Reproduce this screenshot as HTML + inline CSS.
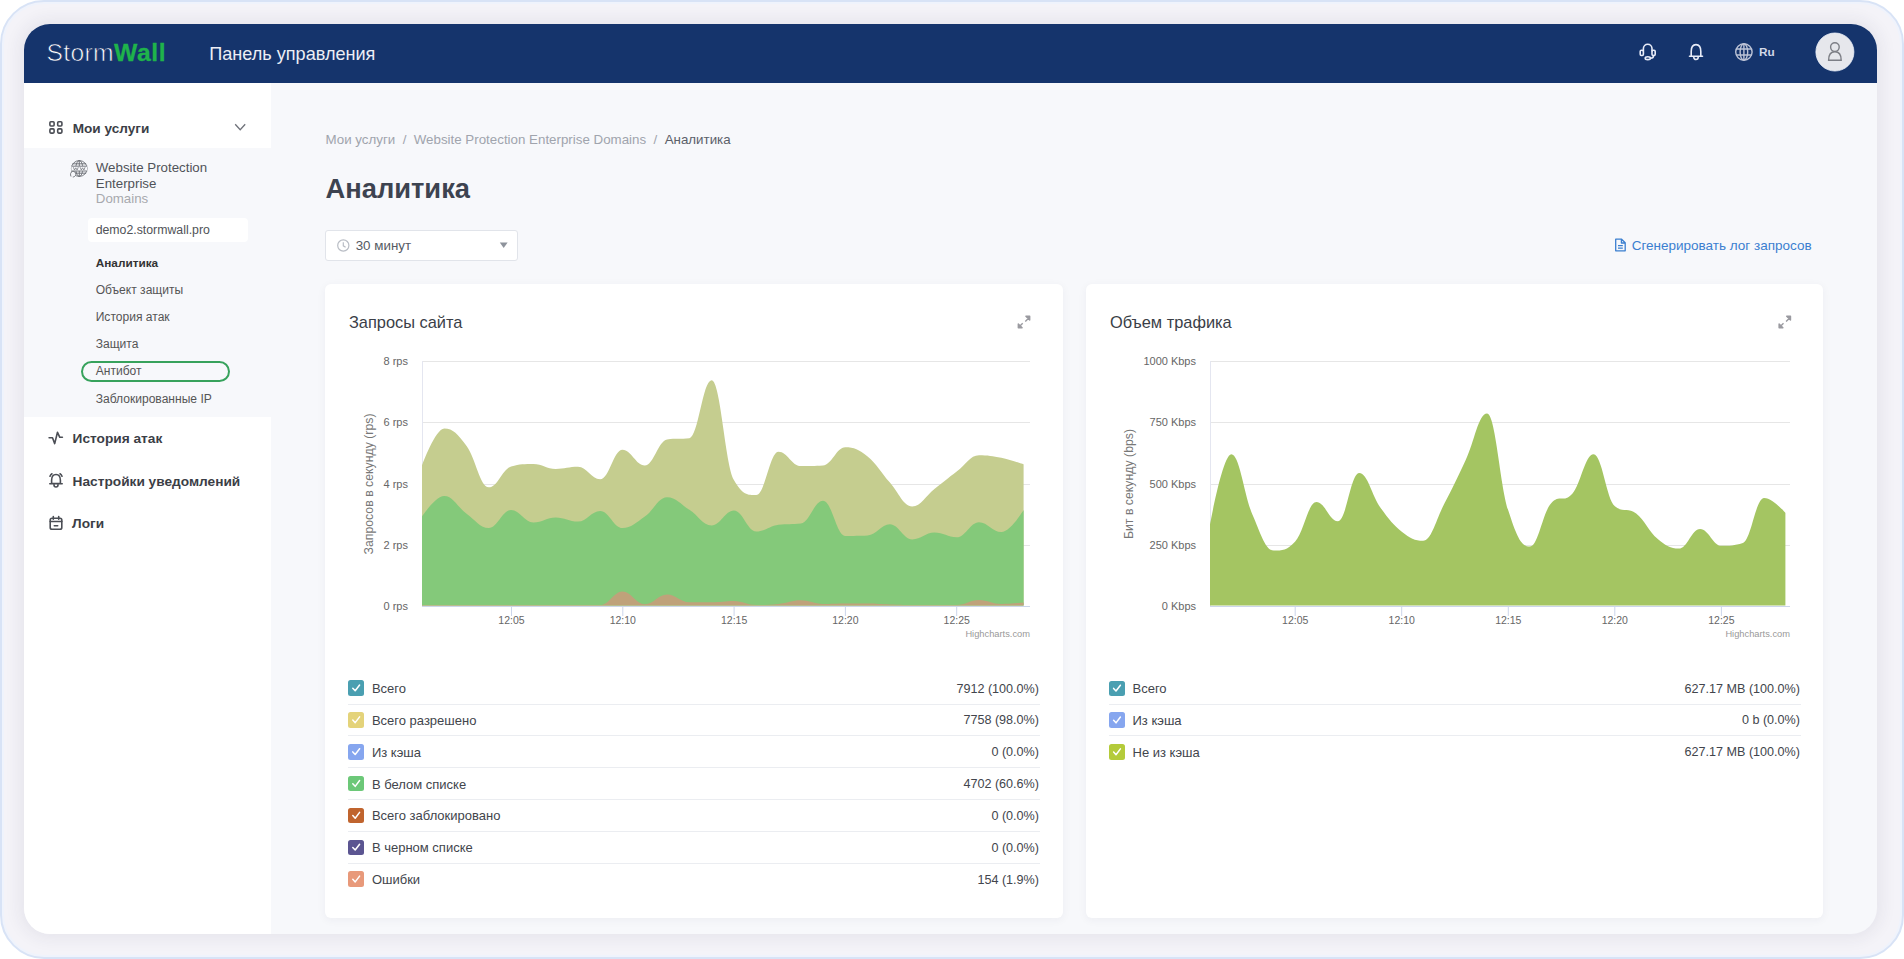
<!DOCTYPE html>
<html><head><meta charset="utf-8">
<style>
*{box-sizing:border-box;margin:0;padding:0}
html,body{width:1904px;height:959px;overflow:hidden;background:#fff;font-family:"Liberation Sans",sans-serif}
.abs{position:absolute}
#frame{position:absolute;left:0;top:0;width:1904px;height:959px;border:2.7px solid #d8e3f6;border-radius:44px;background:#f4f3f8;overflow:hidden;box-shadow:inset 0 0 0 2px #eff3fc}
#app{position:absolute;left:24px;top:24px;width:1853px;height:910px;border-radius:26px;overflow:hidden;background:#f7f8fb;box-shadow:0 0 16px 5px rgba(40,40,80,0.065)}
#hdr{position:absolute;left:0;top:0;width:1853px;height:59px;background:#15346c}
#side{position:absolute;left:0;top:59px;width:247px;height:851px;background:#fff}
.t{position:absolute;white-space:nowrap;line-height:1}
.lg{position:absolute;white-space:nowrap;line-height:1;font-size:13px;color:#42454c}
.vr{position:absolute;white-space:nowrap;line-height:1;font-size:12.6px;color:#42454c;text-align:right}
.cb{position:absolute;width:15.5px;height:15.5px;border-radius:2.5px}
.yl{position:absolute;white-space:nowrap;line-height:1;font-size:11px;color:#666;text-align:right;margin-top:-1px}
.xl{position:absolute;white-space:nowrap;line-height:1;font-size:10.5px;color:#666;width:40px;text-align:center}
.sep{position:absolute;height:1px;background:#ebedf1}
</style></head><body>
<div id="frame"></div>
<div id="app">
  <div id="hdr">
    <div class="t" style="left:22.4px;top:16.9px;font-size:24.7px;color:#fff;letter-spacing:0.35px"><span style="-webkit-text-stroke:0.7px #15346c">Storm</span><span style="font-weight:bold;color:#1fb34b;letter-spacing:0.6px;-webkit-text-stroke:0.3px #1fb34b">Wall</span></div>
    <div class="t" style="left:185.2px;top:20.6px;font-size:18.1px;color:#eceef5">Панель управления</div>
    <div class="t" style="left:1735px;top:22.6px;font-size:11.8px;font-weight:bold;color:#d3d9e8">Ru</div>
  </div>
  <div id="side">
    <div class="abs" style="left:0;top:64.5px;width:247px;height:269px;background:#f7f8fb"></div>
    <div class="t" style="left:48.7px;top:38.6px;font-size:13.6px;font-weight:bold;color:#3b3e46">Мои услуги</div>
    <div class="t" style="left:71.8px;top:77.4px;font-size:13.3px;color:#505359;line-height:15.5px">Website Protection<br>Enterprise<br><span style="color:#a7a9ae">Domains</span></div>
    <div class="abs" style="left:64px;top:135px;width:160px;height:23.5px;background:#fff;border-radius:4px"></div>
    <div class="t" style="left:71.7px;top:141.1px;font-size:12.3px;color:#505358">demo2.stormwall.pro</div>
    <div class="t" style="left:71.7px;top:175.1px;font-size:11.8px;font-weight:bold;color:#333">Аналитика</div>
    <div class="t" style="left:71.7px;top:201.3px;font-size:12.07px;color:#555">Объект защиты</div>
    <div class="t" style="left:71.7px;top:228.4px;font-size:12.07px;color:#555">История атак</div>
    <div class="t" style="left:71.7px;top:255.4px;font-size:12.07px;color:#555">Защита</div>
    <div class="abs" style="left:57.3px;top:278.3px;width:149px;height:20.3px;border:2px solid #37a25c;border-radius:11px"></div>
    <div class="t" style="left:71.7px;top:282.4px;font-size:12.07px;color:#555">Антибот</div>
    <div class="t" style="left:71.7px;top:309.9px;font-size:12.07px;color:#555">Заблокированные IP</div>
    <div class="t" style="left:48.6px;top:349.4px;font-size:13.7px;font-weight:bold;color:#3b3e46">История атак</div>
    <div class="t" style="left:48.6px;top:391.8px;font-size:13.7px;font-weight:bold;color:#3b3e46">Настройки уведомлений</div>
    <div class="t" style="left:48.1px;top:434.1px;font-size:13.7px;font-weight:bold;color:#3b3e46">Логи</div>
  </div>
</div>
<!-- main content in page coords -->
<div class="t" style="left:325.5px;top:132.6px;font-size:13.33px;color:#a0a4ad">Мои услуги&nbsp;&nbsp;/&nbsp;&nbsp;Website Protection Enterprise Domains&nbsp;&nbsp;/&nbsp;&nbsp;<span style="color:#5b6069">Аналитика</span></div>
<div class="t" style="left:325.5px;top:175.2px;font-size:27.3px;font-weight:bold;color:#3d4350">Аналитика</div>
<div class="abs" style="left:325.3px;top:230.2px;width:192.5px;height:30.5px;background:#fff;border:1px solid #e1e4ea;border-radius:3px"></div>
<div class="t" style="left:355.7px;top:239.2px;font-size:13.36px;color:#555a63">30 минут</div>
<div class="t" style="left:1631.7px;top:238.8px;font-size:13.5px;color:#3b7fd0">Сгенерировать лог запросов</div>

<div class="abs" style="left:325px;top:284px;width:738px;height:634px;background:#fff;border-radius:6px;box-shadow:0 2px 10px rgba(30,40,80,0.05)"></div>
<div class="abs" style="left:1086px;top:284px;width:737px;height:634px;background:#fff;border-radius:6px;box-shadow:0 2px 10px rgba(30,40,80,0.05)"></div>
<div class="t" style="left:348.9px;top:314.4px;font-size:16.4px;color:#3a3e47">Запросы сайта</div>
<div class="t" style="left:1109.9px;top:314.4px;font-size:16.4px;color:#3a3e47">Объем трафика</div>

<!-- y labels chart 1 -->
<div class="yl" style="left:348px;width:60px;top:357.2px">8 rps</div>
<div class="yl" style="left:348px;width:60px;top:418.2px">6 rps</div>
<div class="yl" style="left:348px;width:60px;top:480.2px">4 rps</div>
<div class="yl" style="left:348px;width:60px;top:541.2px">2 rps</div>
<div class="yl" style="left:348px;width:60px;top:602.2px">0 rps</div>
<div class="t" style="left:368.6px;top:483.7px;font-size:12.3px;color:#777;transform:translate(-50%,-50%) rotate(-90deg)">Запросов в секунду (rps)</div>
<div class="xl" style="left:491.5px;top:615px">12:05</div>
<div class="xl" style="left:602.8px;top:615px">12:10</div>
<div class="xl" style="left:714.1px;top:615px">12:15</div>
<div class="xl" style="left:825.4px;top:615px">12:20</div>
<div class="xl" style="left:936.7px;top:615px">12:25</div>
<div class="t" style="left:930px;width:100px;text-align:right;top:630.4px;font-size:9.3px;color:#999">Highcharts.com</div>

<!-- y labels chart 2 -->
<div class="yl" style="left:1116px;width:80px;top:357.2px">1000 Kbps</div>
<div class="yl" style="left:1116px;width:80px;top:418.2px">750 Kbps</div>
<div class="yl" style="left:1116px;width:80px;top:480.2px">500 Kbps</div>
<div class="yl" style="left:1116px;width:80px;top:541.2px">250 Kbps</div>
<div class="yl" style="left:1116px;width:80px;top:602.2px">0 Kbps</div>
<div class="t" style="left:1129.1px;top:483.8px;font-size:12.3px;color:#777;transform:translate(-50%,-50%) rotate(-90deg)">Бит в секунду (bps)</div>
<div class="xl" style="left:1275.2px;top:615px">12:05</div>
<div class="xl" style="left:1381.7px;top:615px">12:10</div>
<div class="xl" style="left:1488.3px;top:615px">12:15</div>
<div class="xl" style="left:1594.8px;top:615px">12:20</div>
<div class="xl" style="left:1701.4px;top:615px">12:25</div>
<div class="t" style="left:1690px;width:100px;text-align:right;top:630.4px;font-size:9.3px;color:#999">Highcharts.com</div>

<!-- legend chart 1 -->
<div class="cb" style="left:348.2px;top:680.3px;background:#4a9fb1"></div>
<div class="cb" style="left:348.2px;top:712.15px;background:#e4d37a"></div>
<div class="cb" style="left:348.2px;top:744px;background:#86a6ef"></div>
<div class="cb" style="left:348.2px;top:775.85px;background:#6cc878"></div>
<div class="cb" style="left:348.2px;top:807.7px;background:#c0642e"></div>
<div class="cb" style="left:348.2px;top:839.55px;background:#5b5591"></div>
<div class="cb" style="left:348.2px;top:871.4px;background:#e8997a"></div>
<div class="lg" style="left:371.9px;top:682px">Всего</div>
<div class="lg" style="left:371.9px;top:713.85px">Всего разрешено</div>
<div class="lg" style="left:371.9px;top:745.7px">Из кэша</div>
<div class="lg" style="left:371.9px;top:777.55px">В белом списке</div>
<div class="lg" style="left:371.9px;top:809.4px">Всего заблокировано</div>
<div class="lg" style="left:371.9px;top:841.25px">В черном списке</div>
<div class="lg" style="left:371.9px;top:873.1px">Ошибки</div>
<div class="vr" style="left:839px;width:200px;top:682.5px">7912 (100.0%)</div>
<div class="vr" style="left:839px;width:200px;top:714.35px">7758 (98.0%)</div>
<div class="vr" style="left:839px;width:200px;top:746.2px">0 (0.0%)</div>
<div class="vr" style="left:839px;width:200px;top:778.05px">4702 (60.6%)</div>
<div class="vr" style="left:839px;width:200px;top:809.9px">0 (0.0%)</div>
<div class="vr" style="left:839px;width:200px;top:841.75px">0 (0.0%)</div>
<div class="vr" style="left:839px;width:200px;top:873.6px">154 (1.9%)</div>
<div class="sep" style="left:348px;width:692px;top:703.5px"></div>
<div class="sep" style="left:348px;width:692px;top:735.35px"></div>
<div class="sep" style="left:348px;width:692px;top:767.2px"></div>
<div class="sep" style="left:348px;width:692px;top:799.05px"></div>
<div class="sep" style="left:348px;width:692px;top:830.9px"></div>
<div class="sep" style="left:348px;width:692px;top:862.75px"></div>

<!-- legend chart 2 -->
<div class="cb" style="left:1109px;top:680.5px;background:#4a9fb1"></div>
<div class="cb" style="left:1109px;top:712.35px;background:#86a6ef"></div>
<div class="cb" style="left:1109px;top:744.2px;background:#b4cb3a"></div>
<div class="lg" style="left:1132.5px;top:682px">Всего</div>
<div class="lg" style="left:1132.5px;top:713.85px">Из кэша</div>
<div class="lg" style="left:1132.5px;top:745.7px">Не из кэша</div>
<div class="vr" style="left:1600px;width:200px;top:682.5px">627.17 MB (100.0%)</div>
<div class="vr" style="left:1600px;width:200px;top:714.35px">0 b (0.0%)</div>
<div class="vr" style="left:1600px;width:200px;top:746.2px">627.17 MB (100.0%)</div>
<div class="sep" style="left:1109px;width:692px;top:703.5px"></div>
<div class="sep" style="left:1109px;width:692px;top:735.35px"></div>

<svg class="abs" style="left:0;top:0" width="1904" height="959" viewBox="0 0 1904 959">
  <g stroke="#e6e6e6" stroke-width="1">
    <path d="M422,361.5H1030M422,422.5H1030M422,484.5H1030M422,545.5H1030"/>
    <path d="M1210,361.5H1790M1210,422.5H1790M1210,484.5H1790M1210,545.5H1790"/>
  </g>
  <path stroke="#e4e6f0" d="M422.5,361V606M1210.5,361V606"/>
  <path fill="#c5cd8f" d="M422.0,605.5 L422.0,465.5 C422.0,465.5 435.4,428.5 444.3,428.5 C453.2,428.5 457.6,434.2 466.6,446.0 C475.5,457.8 479.9,487.3 488.8,487.3 C497.8,487.3 502.2,469.0 511.1,466.5 C520.0,464.0 524.5,464.0 533.4,464.0 C542.3,464.0 546.8,469.0 555.7,469.0 C564.6,469.0 569.0,466.8 578.0,466.8 C586.9,466.8 591.3,479.3 600.2,479.3 C609.2,479.3 613.6,449.7 622.5,449.7 C631.4,449.7 635.9,465.5 644.8,465.5 C653.7,465.5 658.2,440.8 667.1,439.5 C676.0,438.2 680.4,439.5 689.4,438.2 C698.3,436.9 702.7,380.3 711.6,380.3 C720.6,380.3 725.0,464.8 733.9,479.9 C742.8,495.0 747.3,495.0 756.2,495.0 C765.1,495.0 769.6,451.7 778.5,451.7 C787.4,451.7 791.8,466.1 800.8,466.1 C809.7,466.1 814.1,466.1 823.0,465.5 C832.0,464.9 836.4,447.3 845.3,447.3 C854.2,447.3 858.7,449.4 867.6,456.5 C876.5,463.6 881.0,472.6 889.9,482.6 C898.8,492.6 903.2,506.5 912.2,506.5 C921.1,506.5 925.5,496.1 934.4,489.1 C943.4,482.1 947.8,478.4 956.7,471.6 C965.6,464.8 970.1,455.2 979.0,455.2 C987.9,455.2 992.4,456.0 1001.3,457.8 C1010.2,459.6 1023.6,464.3 1023.6,464.3 L1023.6,605.5 Z"/>
  <path fill="#84c97a" d="M422.0,605.5 L422.0,516.5 C422.0,516.5 435.4,496.0 444.3,496.0 C453.2,496.0 457.6,507.3 466.6,513.7 C475.5,520.1 479.9,528.0 488.8,528.0 C497.8,528.0 502.2,510.0 511.1,510.0 C520.0,510.0 524.5,522.5 533.4,522.5 C542.3,522.5 546.8,517.5 555.7,517.5 C564.6,517.5 569.0,521.6 578.0,521.6 C586.9,521.6 591.3,511.0 600.2,511.0 C609.2,511.0 613.6,528.1 622.5,528.1 C631.4,528.1 635.9,522.8 644.8,516.6 C653.7,510.4 658.2,497.2 667.1,497.2 C676.0,497.2 680.4,504.1 689.4,509.8 C698.3,515.5 702.7,525.5 711.6,525.5 C720.6,525.5 725.0,510.6 733.9,510.6 C742.8,510.6 747.3,531.5 756.2,531.5 C765.1,531.5 769.6,525.8 778.5,524.7 C787.4,523.6 791.8,524.7 800.8,523.6 C809.7,522.5 814.1,500.7 823.0,500.7 C832.0,500.7 836.4,535.9 845.3,535.9 C854.2,535.9 858.7,535.9 867.6,535.5 C876.5,535.1 881.0,524.3 889.9,524.3 C898.8,524.3 903.2,539.4 912.2,539.4 C921.1,539.4 925.5,532.6 934.4,532.6 C943.4,532.6 947.8,537.3 956.7,537.3 C965.6,537.3 970.1,522.2 979.0,522.2 C987.9,522.2 992.4,532.1 1001.3,532.1 C1010.2,532.1 1023.6,510.0 1023.6,510.0 L1023.6,605.5 Z"/>
  <path fill="#bfa27a" d="M422.0,605.5 L422.0,605.0 C422.0,605.0 435.4,605.0 444.3,605.0 C453.2,605.0 457.6,605.0 466.6,605.0 C475.5,605.0 479.9,605.0 488.8,605.0 C497.8,605.0 502.2,605.0 511.1,605.0 C520.0,605.0 524.5,605.0 533.4,605.0 C542.3,605.0 546.8,605.0 555.7,605.0 C564.6,605.0 569.0,605.0 578.0,605.0 C586.9,605.0 591.3,605.0 600.2,605.0 C609.2,605.0 613.6,591.4 622.5,591.4 C631.4,591.4 635.9,604.2 644.8,604.2 C653.7,604.2 658.2,594.5 667.1,594.5 C676.0,594.5 680.4,602.3 689.4,602.3 C698.3,602.3 702.7,602.3 711.6,602.3 C720.6,602.3 725.0,601.0 733.9,601.0 C742.8,601.0 747.3,605.0 756.2,605.0 C765.1,605.0 769.6,604.9 778.5,604.0 C787.4,603.1 791.8,600.3 800.8,600.3 C809.7,600.3 814.1,604.0 823.0,604.0 C832.0,604.0 836.4,603.5 845.3,603.5 C854.2,603.5 858.7,603.5 867.6,603.5 C876.5,603.5 881.0,604.2 889.9,604.5 C898.8,604.8 903.2,605.0 912.2,605.0 C921.1,605.0 925.5,605.0 934.4,605.0 C943.4,605.0 947.8,605.0 956.7,605.0 C965.6,605.0 970.1,600.0 979.0,600.0 C987.9,600.0 992.4,604.0 1001.3,604.0 C1010.2,604.0 1023.6,602.5 1023.6,602.5 L1023.6,605.5 Z"/>
  <path fill="#a4c562" d="M1210.0,605.5 L1210.0,524.6 C1210.0,524.6 1222.8,454.2 1231.3,454.2 C1239.8,454.2 1244.1,495.7 1252.6,515.0 C1261.1,534.3 1265.4,550.6 1273.9,550.6 C1282.5,550.6 1286.7,550.6 1295.2,541.5 C1303.8,532.4 1308.0,502.1 1316.5,502.1 C1325.1,502.1 1329.3,521.3 1337.9,521.3 C1346.4,521.3 1350.6,473.1 1359.2,473.1 C1367.7,473.1 1372.0,496.0 1380.5,507.7 C1389.0,519.4 1393.3,525.1 1401.8,531.7 C1410.3,538.3 1414.6,540.7 1423.1,540.7 C1431.6,540.7 1435.9,519.7 1444.4,503.5 C1452.9,487.3 1457.2,477.9 1465.7,459.9 C1474.2,441.9 1478.5,413.4 1487.0,413.4 C1495.6,413.4 1499.8,484.0 1508.3,510.6 C1516.9,537.2 1521.1,546.6 1529.7,546.6 C1538.2,546.6 1542.4,513.3 1551.0,503.5 C1559.5,493.7 1563.7,503.5 1572.3,493.7 C1580.8,483.9 1585.1,454.2 1593.6,454.2 C1602.1,454.2 1606.4,499.2 1614.9,506.3 C1623.4,513.4 1627.7,506.9 1636.2,513.4 C1644.7,519.9 1649.0,531.7 1657.5,538.7 C1666.0,545.7 1670.3,548.6 1678.8,548.6 C1687.3,548.6 1691.6,528.9 1700.1,528.9 C1708.7,528.9 1712.9,545.8 1721.4,545.8 C1730.0,545.8 1734.2,545.8 1742.8,543.0 C1751.3,540.2 1755.5,497.9 1764.1,497.9 C1772.6,497.9 1785.4,512.8 1785.4,512.8 L1785.4,605.5 Z"/>
  <g stroke="#ccd6eb" stroke-width="1">
    <path d="M422,606.5H1030M1210,606.5H1790"/>
    <path d="M511.5,606V616M622.8,606V616M734.1,606V616M845.4,606V616M956.7,606V616"/>
    <path d="M1295.2,606V616M1401.7,606V616M1508.3,606V616M1614.8,606V616M1721.4,606V616"/>
  </g>
  <!-- checkmarks -->
  <g fill="none" stroke="#fff" stroke-width="1.5" stroke-linecap="round" stroke-linejoin="round">
    <path id="ck" d="M352.8,688.2L355.2,690.8L359.6,685"/>
    <use href="#ck" y="31.85"/><use href="#ck" y="63.7"/><use href="#ck" y="95.55"/><use href="#ck" y="127.4"/><use href="#ck" y="159.25"/><use href="#ck" y="191.1"/>
    <use href="#ck" x="760.8" y="0.2"/><use href="#ck" x="760.8" y="32.05"/><use href="#ck" x="760.8" y="63.9"/>
  </g>
  <!-- expand icons -->
  <g fill="#9a9aa0" stroke="#9a9aa0" stroke-width="1.4" stroke-linejoin="round">
    <path id="ex" d="M1025.9,316.3H1029.7V320.1Z M1025.3,321.5L1028.3,318.5 M1018.3,324V327.8H1022.1Z M1022.7,323.2L1019.7,326.2"/>
    <use href="#ex" x="760.8"/>
  </g>
  <!-- dropdown -->
  <circle cx="343.3" cy="245.5" r="5.6" fill="none" stroke="#b9bdc5" stroke-width="1.2"/>
  <path d="M343.3,242.2V245.8L345.6,247.3" fill="none" stroke="#b9bdc5" stroke-width="1.2"/>
  <path d="M499.8,242.6H507.6L503.7,248Z" fill="#8e939c"/>
  <!-- doc icon -->
  <path transform="translate(-0.8,0)" d="M1616.5,239.2H1622.4L1626,242.8V250.8H1616.5Z M1622.2,239.2V243H1626 M1618.8,245.6H1623.6M1618.8,248.2H1623.6" fill="none" stroke="#3b7fd0" stroke-width="1.3" stroke-linejoin="round"/>
  <!-- header icons -->
  <g fill="none" stroke="#e8ecf8" stroke-width="1.6" stroke-linecap="round" stroke-linejoin="round">
    <path d="M1643.4,51V48.5A4.3,4.3 0 0 1 1652,48.5V51"/>
    <rect x="1640.2" y="50.3" width="3.2" height="5.2" rx="1.2"/>
    <rect x="1652" y="50.3" width="3.2" height="5.2" rx="1.2"/>
    <path d="M1653.6,55.6C1653.6,57.5 1652.5,58.3 1650.6,58.3"/>
    <ellipse cx="1647.8" cy="58.2" rx="2.6" ry="1.4"/>
    <path d="M1696,44.6C1692.2,44.6 1691.2,48 1691.2,51.5V56.2H1700.8V51.5C1700.8,48 1699.8,44.6 1696,44.6Z M1689.5,56.3H1702.5 M1693.8,57.3A2.2,2.2 0 0 0 1698.2,57.3"/>
  </g>
  <g fill="none" stroke="#bcc3d6" stroke-width="1.4">
    <circle cx="1743.9" cy="52" r="8.2"/>
    <ellipse cx="1743.9" cy="52" rx="3.8" ry="8.2"/>
    <path d="M1743.9,43.8V60.2M1736,49H1751.8M1736,55H1751.8"/>
  </g>
  <circle cx="1834.9" cy="52" r="19" fill="#e6e7ec" stroke="#eef2fb" stroke-width="0.8"/>
  <g fill="none" stroke="#7d7f86" stroke-width="1.4">
    <circle cx="1834.9" cy="47.1" r="4.3"/>
    <path d="M1828.6,60.2C1828.6,55 1831,51.7 1834.9,51.7C1838.8,51.7 1841.2,55 1841.2,60.2Z"/>
  </g>
  <!-- sidebar icons -->
  <g fill="none" stroke="#4b4e55" stroke-width="1.6" stroke-linejoin="round" stroke-linecap="round">
    <rect x="49.9" y="121.8" width="4.2" height="4.2" rx="1"/>
    <rect x="57.7" y="121.8" width="4.2" height="4.2" rx="1"/>
    <rect x="49.9" y="128.9" width="4.2" height="4.2" rx="1"/>
    <rect x="57.7" y="128.9" width="4.2" height="4.2" rx="1"/>
    <path d="M49.1,437.8H52.5L54.7,443.6L57.5,432.3L59.8,437.3H62.4"/>
    <path d="M56,474.5C52.6,474.5 51.6,477.2 51.6,480.3V483.6H60.4V480.3C60.4,477.2 59.4,474.5 56,474.5Z M49.8,483.8H62.2 M54,485A2,2 0 0 0 58,485 M50,476.2A5,5 0 0 1 52,473.8 M60,473.8A5,5 0 0 1 62,476.2"/>
    <rect x="50.2" y="518.2" width="11.6" height="11" rx="1.8"/>
    <path d="M50.2,521.5H61.8M53.3,516.6V519.2M58.7,516.6V519.2M54.3,525.8H57.7"/>
  </g>
  <path d="M235.2,124.3L240.2,129.8L245.2,124.3" fill="none" stroke="#6f727a" stroke-width="1.3"/>
  <g fill="none" stroke="#6a6d73" stroke-width="0.9">
    <circle cx="79.3" cy="168.5" r="7.9"/>
    <ellipse cx="79.3" cy="168.5" rx="3.5" ry="7.9"/>
    <path d="M79.3,160.6V176.4M72.5,163.8H86.1M72.5,173.2H86.1"/>
    <rect x="71.4" y="166" width="15.8" height="5" fill="#f7f8fb" stroke="none"/>
    <path d="M71.6,166.2H87M71.6,171H87" />
    <path d="M73.3,167.2L74.5,170L75.8,167.8L77.1,170L78.3,167.2M80.1,167.2L81.3,170L82.6,167.8L83.9,170L85.1,167.2" stroke-width="0.7"/>
    <path d="M71,176.5C70,174.5 70.5,172 72.5,171.5C74.5,171 76,172.5 75.8,174.5C75.6,176.2 74,177 72.8,177" fill="#f7f8fb"/>
  </g>
</svg>
</body></html>
